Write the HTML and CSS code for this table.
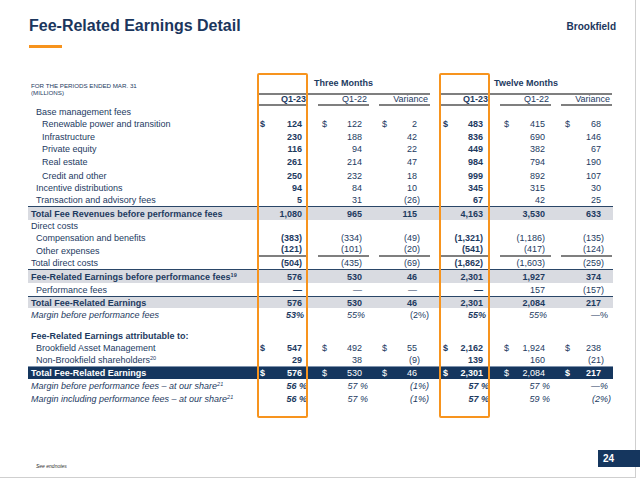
FILE: index.html
```html
<!DOCTYPE html>
<html lang="en">
<head>
<meta charset="utf-8">
<title>Fee-Related Earnings Detail</title>
<link rel="stylesheet" href="styles.css">
</head>
<body>
<div class="slide">
  <div class="top">
    <div>
      <h1 class="title">Fee-Related Earnings Detail</h1>
      <div class="rule"></div>
    </div>
    <div class="brand">Brookfield</div>
  </div>

  <div class="table">
    <div class="thead">
      <div class="note">FOR THE PERIODS ENDED MAR. 31<br>(MILLIONS)</div>
      <div class="period p3">Three Months</div>
      <div class="period p12">Twelve Months</div>
      <div class="colh bold">Q1-23</div>
      <div class="colh">Q1-22</div>
      <div class="colh">Variance</div>
      <div class="colh bold">Q1-23</div>
      <div class="colh">Q1-22</div>
      <div class="colh">Variance</div>
    </div>

    <div class="row h12"><div class="lab l1">Base management fees</div></div>
    <div class="row h12"><div class="lab l2">Renewable power and transition</div>
      <div class="c ca"><span class="cur">$</span>124</div><div class="c cb"><span class="cur">$</span>122</div><div class="c cc"><span class="cur">$</span>2</div>
      <div class="c cd"><span class="cur">$</span>483</div><div class="c ce"><span class="cur">$</span>415</div><div class="c cf"><span class="cur">$</span>68</div></div>
    <div class="row h13"><div class="lab l2">Infrastructure</div>
      <div class="c ca">230</div><div class="c cb">188</div><div class="c cc">42</div>
      <div class="c cd">836</div><div class="c ce">690</div><div class="c cf">146</div></div>
    <div class="row h12"><div class="lab l2">Private equity</div>
      <div class="c ca">116</div><div class="c cb">94</div><div class="c cc">22</div>
      <div class="c cd">449</div><div class="c ce">382</div><div class="c cf">67</div></div>
    <div class="row h14"><div class="lab l2">Real estate</div>
      <div class="c ca">261</div><div class="c cb">214</div><div class="c cc">47</div>
      <div class="c cd">984</div><div class="c ce">794</div><div class="c cf">190</div></div>
    <div class="row h13"><div class="lab l2">Credit and other</div>
      <div class="c ca">250</div><div class="c cb">232</div><div class="c cc">18</div>
      <div class="c cd">999</div><div class="c ce">892</div><div class="c cf">107</div></div>
    <div class="row h12"><div class="lab l1">Incentive distributions</div>
      <div class="c ca">94</div><div class="c cb">84</div><div class="c cc">10</div>
      <div class="c cd">345</div><div class="c ce">315</div><div class="c cf">30</div></div>
    <div class="row h12"><div class="lab l1">Transaction and advisory fees</div>
      <div class="c ca">5</div><div class="c cb">31</div><div class="c cc"><span class="n">(26)</span></div>
      <div class="c cd">67</div><div class="c ce">42</div><div class="c cf">25</div></div>

    <div class="row h14 band bold"><div class="lab l0">Total Fee Revenues before performance fees</div>
      <div class="c ca">1,080</div><div class="c cb">965</div><div class="c cc">115</div>
      <div class="c cd">4,163</div><div class="c ce">3,530</div><div class="c cf">633</div></div>
    <div class="row h12"><div class="lab l0">Direct costs</div></div>
    <div class="row h12"><div class="lab l1">Compensation and benefits</div>
      <div class="c ca">(383)</div><div class="c cb">(334)</div><div class="c cc"><span class="n">(49)</span></div>
      <div class="c cd">(1,321)</div><div class="c ce">(1,186)</div><div class="c cf"><span class="n">(135)</span></div></div>
    <div class="row h13 sub"><div class="lab l1">Other expenses</div>
      <div class="c ca">(121)</div><div class="c cb">(101)</div><div class="c cc"><span class="n">(20)</span></div>
      <div class="c cd">(541)</div><div class="c ce">(417)</div><div class="c cf"><span class="n">(124)</span></div></div>
    <div class="row h12"><div class="lab l0">Total direct costs</div>
      <div class="c ca">(504)</div><div class="c cb">(435)</div><div class="c cc"><span class="n">(69)</span></div>
      <div class="c cd">(1,862)</div><div class="c ce">(1,603)</div><div class="c cf"><span class="n">(259)</span></div></div>
    <div class="row h14 band bold"><div class="lab l0">Fee-Related Earnings before performance fees<sup class="sup">19</sup></div>
      <div class="c ca">576</div><div class="c cb">530</div><div class="c cc">46</div>
      <div class="c cd">2,301</div><div class="c ce">1,927</div><div class="c cf">374</div></div>
    <div class="row h13"><div class="lab l1">Performance fees</div>
      <div class="c ca">—</div><div class="c cb">—</div><div class="c cc">—</div>
      <div class="c cd">—</div><div class="c ce">157</div><div class="c cf"><span class="n">(157)</span></div></div>
    <div class="row h12 band bold"><div class="lab l0">Total Fee-Related Earnings</div>
      <div class="c ca">576</div><div class="c cb">530</div><div class="c cc">46</div>
      <div class="c cd">2,301</div><div class="c ce">2,084</div><div class="c cf">217</div></div>
    <div class="row h13 it"><div class="lab l0">Margin before performance fees</div>
      <div class="c ca pw">53%</div><div class="c cb pw">55%</div><div class="c cc pn up">(2%)</div>
      <div class="c cd pw">55%</div><div class="c ce pw">55%</div><div class="c cf pw up">—%</div></div>

    <div class="row h12 bold gapped"><div class="lab l0">Fee-Related Earnings attributable to:</div></div>
    <div class="row h12"><div class="lab l1">Brookfield Asset Management</div>
      <div class="c ca"><span class="cur">$</span>547</div><div class="c cb"><span class="cur">$</span>492</div><div class="c cc"><span class="cur">$</span>55</div>
      <div class="c cd"><span class="cur">$</span>2,162</div><div class="c ce"><span class="cur">$</span>1,924</div><div class="c cf"><span class="cur">$</span>238</div></div>
    <div class="row h12"><div class="lab l1">Non-Brookfield shareholders<sup class="sup">20</sup></div>
      <div class="c ca">29</div><div class="c cb">38</div><div class="c cc"><span class="n">(9)</span></div>
      <div class="c cd">139</div><div class="c ce">160</div><div class="c cf"><span class="n">(21)</span></div></div>
    <div class="row h13 navy"><div class="lab l0 bold">Total Fee-Related Earnings</div>
      <div class="c ca"><span class="cur">$</span>576</div><div class="c cb"><span class="cur">$</span>530</div><div class="c cc"><span class="cur">$</span>46</div>
      <div class="c cd"><span class="cur">$</span>2,301</div><div class="c ce"><span class="cur">$</span>2,084</div><div class="c cf bold"><span class="cur">$</span>217</div></div>
    <div class="row h13 it"><div class="lab l0">Margin before performance fees – at our share<sup class="sup">21</sup></div>
      <div class="c ca pn">56 %</div><div class="c cb pn">57 %</div><div class="c cc pn">(1%)</div>
      <div class="c cd pn">57 %</div><div class="c ce pn">57 %</div><div class="c cf pw">—%</div></div>
    <div class="row h13 it"><div class="lab l0">Margin including performance fees – at our share<sup class="sup">21</sup></div>
      <div class="c ca pn">56 %</div><div class="c cb pn">57 %</div><div class="c cc pn">(1%)</div>
      <div class="c cd pn">57 %</div><div class="c ce pn">59 %</div><div class="c cf pn">(2%)</div></div>
  </div>

  <div class="foot">
    <div class="endnote">See endnotes</div>
    <div class="pageno">24</div>
  </div>

  <div class="hl hl1"></div>
  <div class="hl hl2"></div>
</div>
</body>
</html>
```

FILE: styles.css
```css
* { box-sizing: border-box; }

body {
  margin: 0;
  background: #ffffff;
  font-family: "Liberation Sans", Arial, sans-serif;
  color: #1d3a5f;
  overflow: hidden;
}

.slide {
  position: relative;
  width: 636px;
  height: 478px;
  padding-left: 28px;
  border-right: 1px solid #cfcfcf;
  border-bottom: 1px solid #cfcfcf;
}

.top {
  display: flex;
  justify-content: space-between;
  width: 588px;
}

.title {
  margin: 0;
  padding: 16px 0 0 1px;
  font-size: 16px;
  line-height: 20px;
  font-weight: bold;
  color: #1b365d;
}

.rule {
  width: 33px;
  height: 3px;
  margin: 9px 0 0 1px;
  background: #f7931d;
}

.brand {
  padding-top: 21px;
  font-size: 10px;
  line-height: 12px;
  font-weight: bold;
  color: #1b365d;
}

.table {
  margin-top: 26px;
  width: 585px;
  font-size: 9px;
}

.thead,
.row {
  display: grid;
  grid-template-columns: 219px 51px 51px 51px 50px 51px 51px;
  column-gap: 10px;
}

.thead {
  grid-template-rows: 21px 11px;
}

.note {
  grid-row: 1 / 3;
  grid-column: 1;
  align-self: center;
  padding-left: 3px;
  font-size: 6.2px;
  line-height: 6.7px;
}

.period {
  grid-row: 1;
  text-align: center;
  font-weight: bold;
  line-height: 19px;
  border-bottom: 2px solid #7f7f7f;
}

.p3 { grid-column: 2 / 5; }
.p12 { grid-column: 5 / 8; }

.colh {
  grid-row: 2;
  text-align: right;
  padding-right: 2px;
  line-height: 9px;
  border-bottom: 2px solid #7f7f7f;
}

.row {
  align-items: center;
  line-height: 10px;
}

.h12 { height: 12px; }
.h13 { height: 13px; }
.h14 { height: 14px; }

.bold { font-weight: bold; }
.it { font-style: italic; }
.up { font-style: normal; }

.band {
  background: #d9dbe1;
  border-top: 1.5px solid #2a4668;
}

.navy {
  background: #15365e;
  color: #ffffff;
  border-top: 1px solid #7f93ad;
}

.gapped { margin-top: 9px; }

.lab { white-space: nowrap; }
.l0 { padding-left: 3px; }
.l1 { padding-left: 8px; }
.l2 { padding-left: 14px; }

.sup {
  font-size: 5.5px;
  line-height: 0;
  vertical-align: 3px;
}

.c { text-align: right; white-space: nowrap; }
.cur { float: left; }
.n { display: inline-block; margin-right: -3px; }

.ca { padding: 0 6px 0 3px; font-weight: bold; }
.cb { padding: 0 7px 0 4px; }
.cc { padding: 0 13px 0 3px; }
.cd { padding: 0 7px 0 3px; font-weight: bold; }
.ce { padding: 0 6px 0 4px; }
.cf { padding: 0 11px 0 4px; }

.c.pw { padding-right: 4px; }
.c.pn { padding-right: 1px; }

.sub .c {
  align-self: stretch;
  line-height: 11px;
  border-bottom: 2px solid #7f7f7f;
}

.foot {
  display: flex;
  justify-content: space-between;
  align-items: flex-start;
  width: 612px;
  margin-top: 45px;
}

.endnote {
  margin-top: 13px;
  padding-left: 8px;
  font-size: 5px;
  line-height: 6px;
  font-style: italic;
  color: #333333;
}

.pageno {
  width: 42px;
  height: 17px;
  padding-left: 5px;
  background: #15365e;
  color: #ffffff;
  font-size: 10px;
  line-height: 17px;
  font-weight: bold;
}

.hl {
  position: absolute;
  top: 73px;
  width: 51px;
  height: 345px;
  border: 2px solid #f7941e;
  border-radius: 2px;
}

.hl1 { left: 257px; }
.hl2 { left: 439px; }
```
